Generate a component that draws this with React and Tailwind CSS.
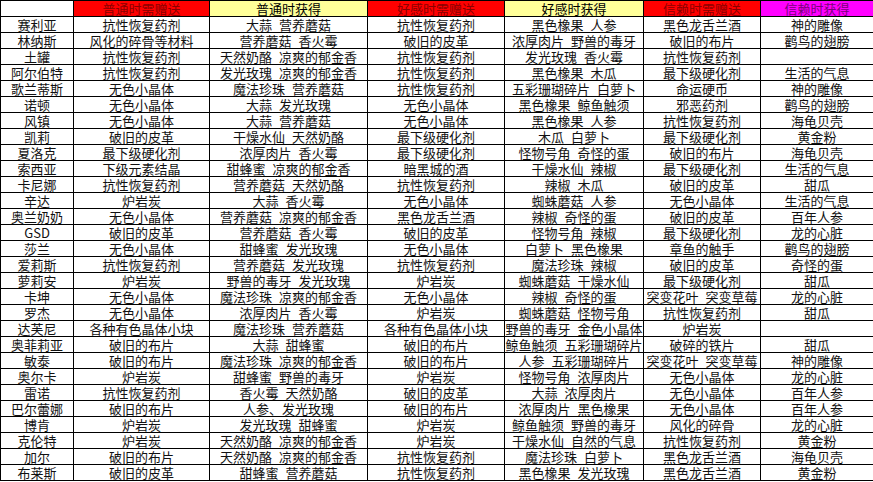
const rows = [
  ["赛利亚", "抗性恢复药剂", "大蒜 营养蘑菇", "抗性恢复药剂", "黑色橡果 人参", "黑色龙舌兰酒", "神的雕像"],
  ["林纳斯", "风化的碎骨等材料", "营养蘑菇 香火霉", "破旧的皮革", "浓厚肉片 野兽的毒牙", "破旧的布片", "鹳鸟的翅膀"],
  ["土罐", "抗性恢复药剂", "天然奶酪 凉爽的郁金香", "抗性恢复药剂", "发光玫瑰 香火霉", "抗性恢复药剂", ""],
  ["阿尔伯特", "抗性恢复药剂", "发光玫瑰 凉爽的郁金香", "抗性恢复药剂", "黑色橡果 木瓜", "最下级硬化剂", "生活的气息"],
  ["歌兰蒂斯", "无色小晶体", "魔法珍珠 营养蘑菇", "抗性恢复药剂", "五彩珊瑚碎片 白萝卜", "命运硬币", "神的雕像"],
  ["诺顿", "无色小晶体", "大蒜 发光玫瑰", "无色小晶体", "黑色橡果 鲸鱼触须", "邪恶药剂", "鹳鸟的翅膀"],
  ["风镇", "无色小晶体", "大蒜 营养蘑菇", "无色小晶体", "黑色橡果 人参", "抗性恢复药剂", "海龟贝壳"],
  ["凯莉", "破旧的皮革", "干燥水仙 天然奶酪", "最下级硬化剂", "木瓜 白萝卜", "最下级硬化剂", "黄金粉"],
  ["夏洛克", "最下级硬化剂", "浓厚肉片 香火霉", "最下级硬化剂", "怪物号角 奇怪的蛋", "破旧的布片", "海龟贝壳"],
  ["索西亚", "下级元素结晶", "甜蜂蜜 凉爽的郁金香", "暗黑城的酒", "干燥水仙 辣椒", "最下级硬化剂", "生活的气息"],
  ["卡尼娜", "抗性恢复药剂", "营养蘑菇 天然奶酪", "抗性恢复药剂", "辣椒 木瓜", "破旧的皮革", "甜瓜"],
  ["辛达", "炉岩炭", "大蒜 香火霉", "无色小晶体", "蜘蛛蘑菇 人参", "无色小晶体", "生活的气息"],
  ["奥兰奶奶", "无色小晶体", "营养蘑菇 凉爽的郁金香", "黑色龙舌兰酒", "辣椒 奇怪的蛋", "破旧的皮革", "百年人参"],
  ["GSD", "破旧的皮革", "营养蘑菇 香火霉", "破旧的皮革", "怪物号角 辣椒", "最下级硬化剂", "龙的心脏"],
  ["莎兰", "无色小晶体", "甜蜂蜜 发光玫瑰", "无色小晶体", "白萝卜 黑色橡果", "章鱼的触手", "鹳鸟的翅膀"],
  ["爱莉斯", "抗性恢复药剂", "营养蘑菇 发光玫瑰", "抗性恢复药剂", "魔法珍珠 辣椒", "破旧的皮革", "奇怪的蛋"],
  ["萝莉安", "炉岩炭", "野兽的毒牙 发光玫瑰", "炉岩炭", "蜘蛛蘑菇 干燥水仙", "最下级硬化剂", "甜瓜"],
  ["卡坤", "无色小晶体", "魔法珍珠 凉爽的郁金香", "无色小晶体", "辣椒 奇怪的蛋", "突变花叶 突变草莓", "龙的心脏"],
  ["罗杰", "无色小晶体", "浓厚肉片 香火霉", "炉岩炭", "蜘蛛蘑菇 怪物号角", "抗性恢复药剂", "甜瓜"],
  ["达芙尼", "各种有色晶体小块", "魔法珍珠 营养蘑菇", "各种有色晶体小块", "野兽的毒牙 金色小晶体", "炉岩炭", ""],
  ["奥菲莉亚", "破旧的布片", "大蒜 甜蜂蜜", "破旧的布片", "鲸鱼触须 五彩珊瑚碎片", "破碎的铁片", "甜瓜"],
  ["敏泰", "破旧的布片", "魔法珍珠 凉爽的郁金香", "破旧的布片", "人参 五彩珊瑚碎片", "突变花叶 突变草莓", "神的雕像"],
  ["奥尔卡", "炉岩炭", "甜蜂蜜 野兽的毒牙", "炉岩炭", "怪物号角 浓厚肉片", "无色小晶体", "龙的心脏"],
  ["雷诺", "抗性恢复药剂", "香火霉 天然奶酪", "破旧的皮革", "大蒜 浓厚肉片", "无色小晶体", "百年人参"],
  ["巴尔蕾娜", "破旧的布片", "人参、发光玫瑰", "破旧的布片", "浓厚肉片 黑色橡果", "无色小晶体", "百年人参"],
  ["博肯", "炉岩炭", "发光玫瑰 甜蜂蜜", "炉岩炭", "鲸鱼触须 野兽的毒牙", "风化的碎骨", "龙的心脏"],
  ["克伦特", "炉岩炭", "天然奶酪 凉爽的郁金香", "炉岩炭", "干燥水仙 自然的气息", "抗性恢复药剂", "黄金粉"],
  ["加尔", "破旧的布片", "天然奶酪 凉爽的郁金香", "抗性恢复药剂", "魔法珍珠 白萝卜", "黑色龙舌兰酒", "海龟贝壳"],
  ["布莱斯", "破旧的皮革", "甜蜂蜜 营养蘑菇", "抗性恢复药剂", "黑色橡果 发光玫瑰", "黑色龙舌兰酒", "黄金粉"],
];

const widths = ["w-[73px]", "w-[136px]", "w-[158px]", "w-[137px]", "w-[139px]", "w-[117px]", "w-[113px]"];

const headers = [
  { t: "", c: "bg-white" },
  { t: "普通时需赠送", c: "bg-[#ff0000] text-[#8a0000]" },
  { t: "普通时获得", c: "bg-[#ffff99] text-black" },
  { t: "好感时需赠送", c: "bg-[#ff0000] text-[#8a0000]" },
  { t: "好感时获得", c: "bg-[#ffff99] text-black" },
  { t: "信赖时需赠送", c: "bg-[#ff0000] text-[#8a0000]" },
  { t: "信赖时获得", c: "bg-[#ff00ff] text-[#7a007a]" },
];

export default function App() {
  return (
    <div
      className="w-[873px] h-[482px] bg-white overflow-hidden"
      style={{ fontFamily: '"Noto Sans CJK SC", "Noto Sans", sans-serif' }}
    >
      <table className="table-fixed border-collapse w-[873px] text-[13px] text-[#111] [word-spacing:4px]">
        <colgroup>
          {widths.map((w, i) => (
            <col key={i} className={w} />
          ))}
        </colgroup>
        <thead>
          <tr className="h-[16px]">
            {headers.map((h, i) => (
              <th
                key={i}
                className={`border border-black p-0 font-normal text-center leading-[15px] whitespace-nowrap overflow-hidden ${h.c}`}
              >
                {h.t}
              </th>
            ))}
          </tr>
        </thead>
        <tbody>
          {rows.map((r, ri) => (
            <tr key={ri} className="h-[16px]">
              {r.map((cell, ci) => (
                <td
                  key={ci}
                  className="border border-black p-0 text-center leading-[15px] whitespace-pre overflow-hidden"
                >
                  {cell}
                </td>
              ))}
            </tr>
          ))}
        </tbody>
      </table>
    </div>
  );
}
